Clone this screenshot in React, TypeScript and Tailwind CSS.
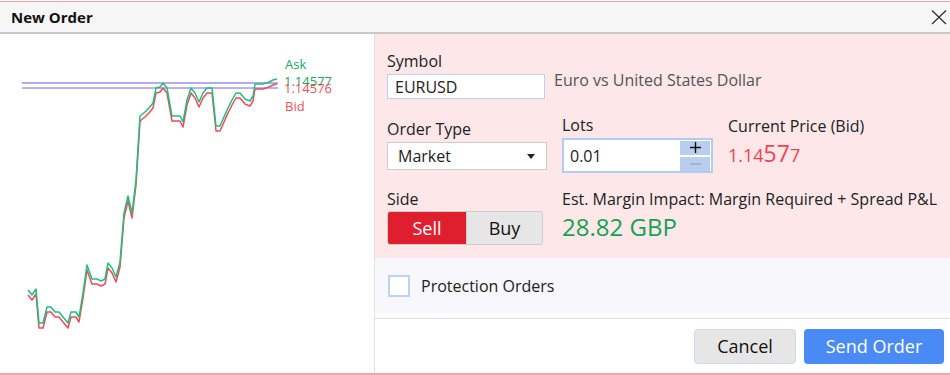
import React from 'react';

const ask: [number, number][] = [
  [28, 290], [32, 295], [36, 289], [39, 323], [43, 323], [47, 307], [51, 307], [55, 312],
  [59, 312], [63, 317], [68, 323], [71, 312], [76, 312], [79, 317], [83, 293], [87, 265],
  [92, 279], [97, 279], [101, 281], [105, 279], [108, 263], [112, 268], [116, 277], [120, 262],
  [124, 213], [128, 196], [132, 213], [136, 180], [140, 116], [145, 112], [149, 108], [153, 103],
  [156, 88], [160, 87], [163, 83], [167, 88], [172, 116], [180, 116], [183, 122], [187, 100],
  [191, 88], [195, 93], [199, 102], [203, 93], [207, 88], [212, 88], [216, 126], [220, 126],
  [224, 117], [228, 108], [232, 100], [236, 93], [240, 93], [245, 99], [250, 101], [253, 97],
  [255, 85], [263, 85], [269, 83], [273, 81], [277, 80],
];

const toPath = (pts: [number, number][], dy: number) =>
  pts.map(([x, y], i) => `${i ? 'L' : 'M'}${x} ${y + (x > 252 ? dy - 1 : dy)}`).join(' ');

const PriceChart = () => (
  <svg width="374" height="339" viewBox="0 34 374 339" className="block">
    <line x1="22" y1="83" x2="278" y2="83" stroke="#9a8ff0" strokeWidth="1.6" />
    <line x1="22" y1="88" x2="278" y2="88" stroke="#7565e2" strokeWidth="1.2" />
    <path d={toPath(ask, 5)} fill="none" stroke="#f24a58" strokeWidth="1.5" strokeLinejoin="round" />
    <path d={toPath(ask, 0)} fill="none" stroke="#1fbf7f" strokeWidth="1.5" strokeLinejoin="round" />
    <g fontFamily="'Open Sans', sans-serif" fontSize="13">
      <text x="285" y="68.5" fill="#22a468">Ask</text>
      <text x="284" y="86" fill="#22a468">1.14577</text>
      <text x="284" y="92.5" fill="#f0525c">1.14576</text>
      <text x="285" y="110.5" fill="#f0525c">Bid</text>
    </g>
  </svg>
);

export default function App() {
  return (
    <div className="w-[950px] h-[375px] flex flex-col bg-white text-[#222] overflow-hidden" style={{ fontFamily: "'Open Sans', 'Noto Sans', sans-serif" }}>
      <div className="h-px bg-white" />
      <div className="h-px bg-[#e6a2a8]" />
      <div className="h-[32px] border-b-2 border-[#c9c9c9] bg-[#f6f6f6] flex items-center justify-between pl-[11px] pr-[3px]">
        <h1 className="text-[15px] font-bold text-[#111] leading-none">New Order</h1>
        <svg width="16" height="15" viewBox="0 0 16 15">
          <path d="M1 0.5 L15 14 M15 0.5 L1 14" stroke="#333" strokeWidth="1.3" />
        </svg>
      </div>

      <div className="flex flex-1 min-h-0">
        <div className="w-[375px] border-r border-[#e2e2e2]">
          <PriceChart />
        </div>

        <div className="flex-1 flex flex-col">
          {/* form */}
          <div className="h-[224px] bg-[#fde7e8] pl-[12px] pt-[17px] text-[16px]">
            <div className="flex">
              <div className="w-[167px] flex flex-col">
                <label className="h-5 leading-5">Symbol</label>
                <div className="mt-[3px] w-[158px] h-[25px] bg-white border border-[#b9d3ef] pl-[7px] flex items-center">EURUSD</div>
              </div>
              <div className="pt-[19px] leading-5 text-[#555]">Euro vs United States Dollar</div>
            </div>

            <div className="flex mt-[16px]">
              <div className="w-[175px] flex flex-col">
                <label className="mt-[4px] h-5 leading-5">Order Type</label>
                <div className="mt-[3px] w-[160px] h-[28px] bg-white border border-[#cccccc] pl-[10px] pr-[11px] flex items-center justify-between">
                  <span>Market</span>
                  <svg width="8" height="5" viewBox="0 0 8 5"><path d="M0 0 H8 L4 5 Z" fill="#222" /></svg>
                </div>
              </div>
              <div className="w-[166px] flex flex-col">
                <label className="h-5 leading-5">Lots</label>
                <div className="mt-[3px] w-[151px] h-[35px] bg-white border-2 border-[#b3cdf2] flex items-center justify-between pl-[6px] pr-px">
                  <span>0.01</span>
                  <div className="flex flex-col gap-[2px]">
                    <div className="w-[30px] h-[14px] bg-[#b9cdee] flex items-center justify-center">
                      <svg width="11" height="11" viewBox="0 0 11 11"><path d="M5.5 0 V11 M0 5.5 H11" stroke="#111" strokeWidth="1.4" /></svg>
                    </div>
                    <div className="w-[30px] h-[14px] bg-[#b9cdee] flex items-center justify-center">
                      <svg width="11" height="2" viewBox="0 0 11 2"><path d="M0 1 H11" stroke="#8aa0c4" strokeWidth="1.2" /></svg>
                    </div>
                  </div>
                </div>
              </div>
              <div className="flex flex-col">
                <label className="mt-px h-5 leading-5">Current Price (Bid)</label>
                <div className="mt-[2px] h-[30px] flex items-baseline text-[#f0444f] leading-[30px]">
                  <span className="text-[18px]">1.14</span>
                  <span className="text-[23px]">57</span>
                  <span className="text-[18px]">7</span>
                </div>
              </div>
            </div>

            <div className="flex mt-[16px]">
              <div className="w-[175px] flex flex-col">
                <label className="h-5 leading-5">Side</label>
                <div className="mt-[2px] w-[156px] h-[34px] flex rounded-[3px] overflow-hidden border border-[#cccccc] text-[18px]">
                  <button className="w-[78px] bg-[#e01f2e] text-white">Sell</button>
                  <button className="flex-1 bg-[#e6e6e6] text-[#111] border-l border-[#cccccc]">Buy</button>
                </div>
              </div>
              <div className="flex flex-col">
                <label className="h-5 leading-5">Est. Margin Impact: Margin Required + Spread P&amp;L</label>
                <div className="mt-[3px] h-[30px] leading-[30px] text-[24px] text-[#16a254]">28.82 GBP</div>
              </div>
            </div>
          </div>

          {/* protection */}
          <div className="h-[55px] bg-[#f7f7fc] flex items-center pl-[13px] gap-[11px] text-[16px]">
            <div className="w-[22px] h-[22px] bg-white border-2 border-[#bcd3f2]" />
            <span>Protection Orders</span>
          </div>
          <div className="mt-[5px] h-px bg-[#dedee6]" />

          {/* footer */}
          <div className="flex-1 bg-white flex items-center justify-end gap-[8px] pr-[6px] text-[18px]">
            <button className="w-[102px] h-[35px] rounded-[4px] bg-[#e6e6e6] border border-[#cbd9e8] text-[#111]">Cancel</button>
            <button className="w-[140px] h-[35px] rounded-[4px] bg-[#4a8af5] text-white">Send Order</button>
          </div>
        </div>
      </div>
      <div className="h-[2px] bg-[#f0a4ab]" />
    </div>
  );
}
